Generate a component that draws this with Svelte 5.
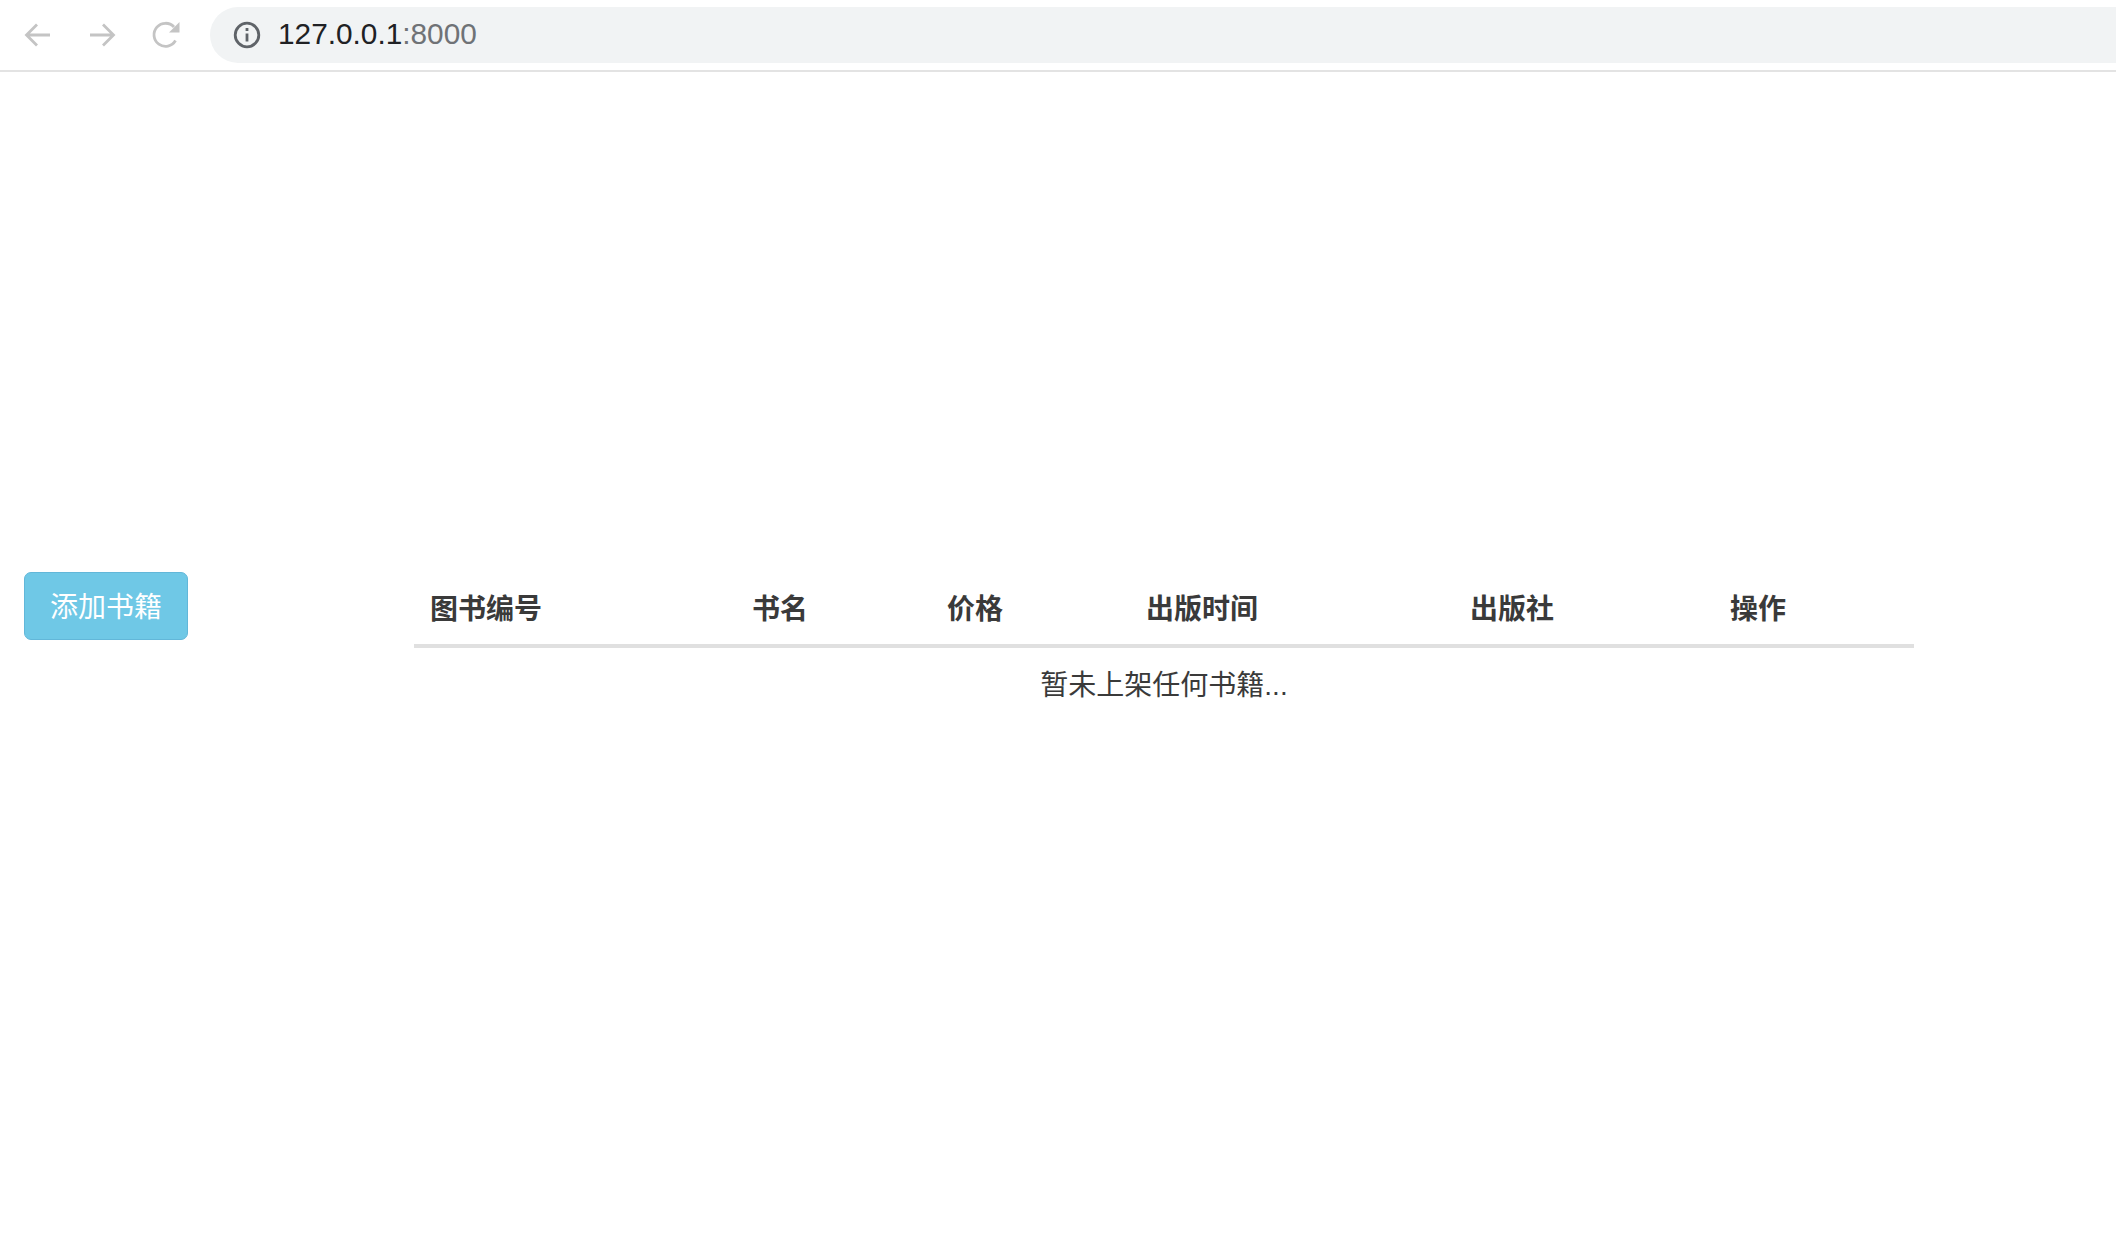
<script>
  const columns = [
    { title: '图书编号', width: 322 },
    { title: '书名', width: 195 },
    { title: '价格', width: 199 },
    { title: '出版时间', width: 324 },
    { title: '出版社', width: 260 },
    { title: '操作', width: 200 }
  ];
</script>

<div class="page">
  <header class="toolbar">
    <svg class="nav" width="28" height="28" viewBox="0 0 28 28" fill="none" aria-label="Back">
      <path d="M26 14H3M13 3.5L2.5 14L13 24.5" stroke="currentColor" stroke-width="2.8" />
    </svg>
    <svg class="nav" width="28" height="28" viewBox="0 0 28 28" fill="none" aria-label="Forward">
      <path d="M2 14H25M15 3.5L25.5 14L15 24.5" stroke="currentColor" stroke-width="2.8" />
    </svg>
    <svg class="nav" width="28" height="28" viewBox="0 0 28 28" fill="none" aria-label="Reload">
      <path d="M23.5 19.5A11.5 11.5 0 1 1 22 6" stroke="currentColor" stroke-width="2.8" />
      <path d="M27.5 1V11.5H17Z" fill="currentColor" />
    </svg>
    <div class="omnibox">
      <svg class="info" width="28" height="28" viewBox="0 0 28 28" fill="none" aria-label="Site information">
        <circle cx="14" cy="14" r="11.8" stroke="currentColor" stroke-width="2.8" />
        <path d="M14 12.5V20.5" stroke="currentColor" stroke-width="2.8" />
        <path d="M14 7V10" stroke="currentColor" stroke-width="2.8" />
      </svg>
      <span class="url">127.0.0.1<span class="port">:8000</span></span>
    </div>
  </header>

  <main class="content">
    <button class="add" type="button">添加书籍</button>
    <table>
      <colgroup>
        {#each columns as col}
          <col style="width: {col.width}px" />
        {/each}
      </colgroup>
      <thead>
        <tr>
          {#each columns as col}
            <th>{col.title}</th>
          {/each}
        </tr>
      </thead>
      <tbody>
        <tr>
          <td colspan="6">暂未上架任何书籍...</td>
        </tr>
      </tbody>
    </table>
  </main>
</div>

<style>
  :global(body) {
    margin: 0;
    background: #fff;
  }

  .page {
    font-family: "Liberation Sans", "Noto Sans CJK SC", sans-serif;
    color: #3a3a3a;
    min-height: 1248px;
  }

  .toolbar {
    display: flex;
    align-items: center;
    height: 70px;
    border-bottom: 2px solid #e3e3e3;
    padding-left: 24px;
    box-sizing: content-box;
    overflow: hidden;
  }

  .nav {
    color: #c4c4c4;
    margin-right: 36px;
    flex-shrink: 0;
  }

  .nav:nth-child(3) {
    margin-right: 30px;
  }

  .omnibox {
    flex: 1;
    display: flex;
    align-items: center;
    height: 56px;
    margin-right: -40px;
    padding-left: 23px;
    background: #f1f3f4;
    border-radius: 28px;
  }

  .info {
    color: #5f6368;
    flex-shrink: 0;
  }

  .url {
    margin-left: 17px;
    margin-top: -2px;
    font-size: 29.8px;
    color: #202124;
  }

  .port {
    color: #6f7276;
  }

  .content {
    display: flex;
    align-items: flex-start;
    padding: 500px 0 0 24px;
  }

  .add {
    width: 164px;
    height: 68px;
    padding: 0 0 2px;
    box-sizing: border-box;
    font-family: inherit;
    font-size: 28px;
    color: #fff;
    background: #6fc8e6;
    border: 1px solid #62b7d9;
    border-radius: 7px;
  }

  table {
    width: 1500px;
    margin-left: 226px;
    table-layout: fixed;
    border-collapse: collapse;
    font-size: 28px;
  }

  th {
    height: 74px;
    padding: 0 16px 2px;
    box-sizing: border-box;
    text-align: left;
    font-weight: 700;
    border-bottom: 4px solid #e0e0e0;
  }

  td {
    padding: 18px 16px 16px;
    line-height: 40px;
    text-align: center;
  }
</style>
